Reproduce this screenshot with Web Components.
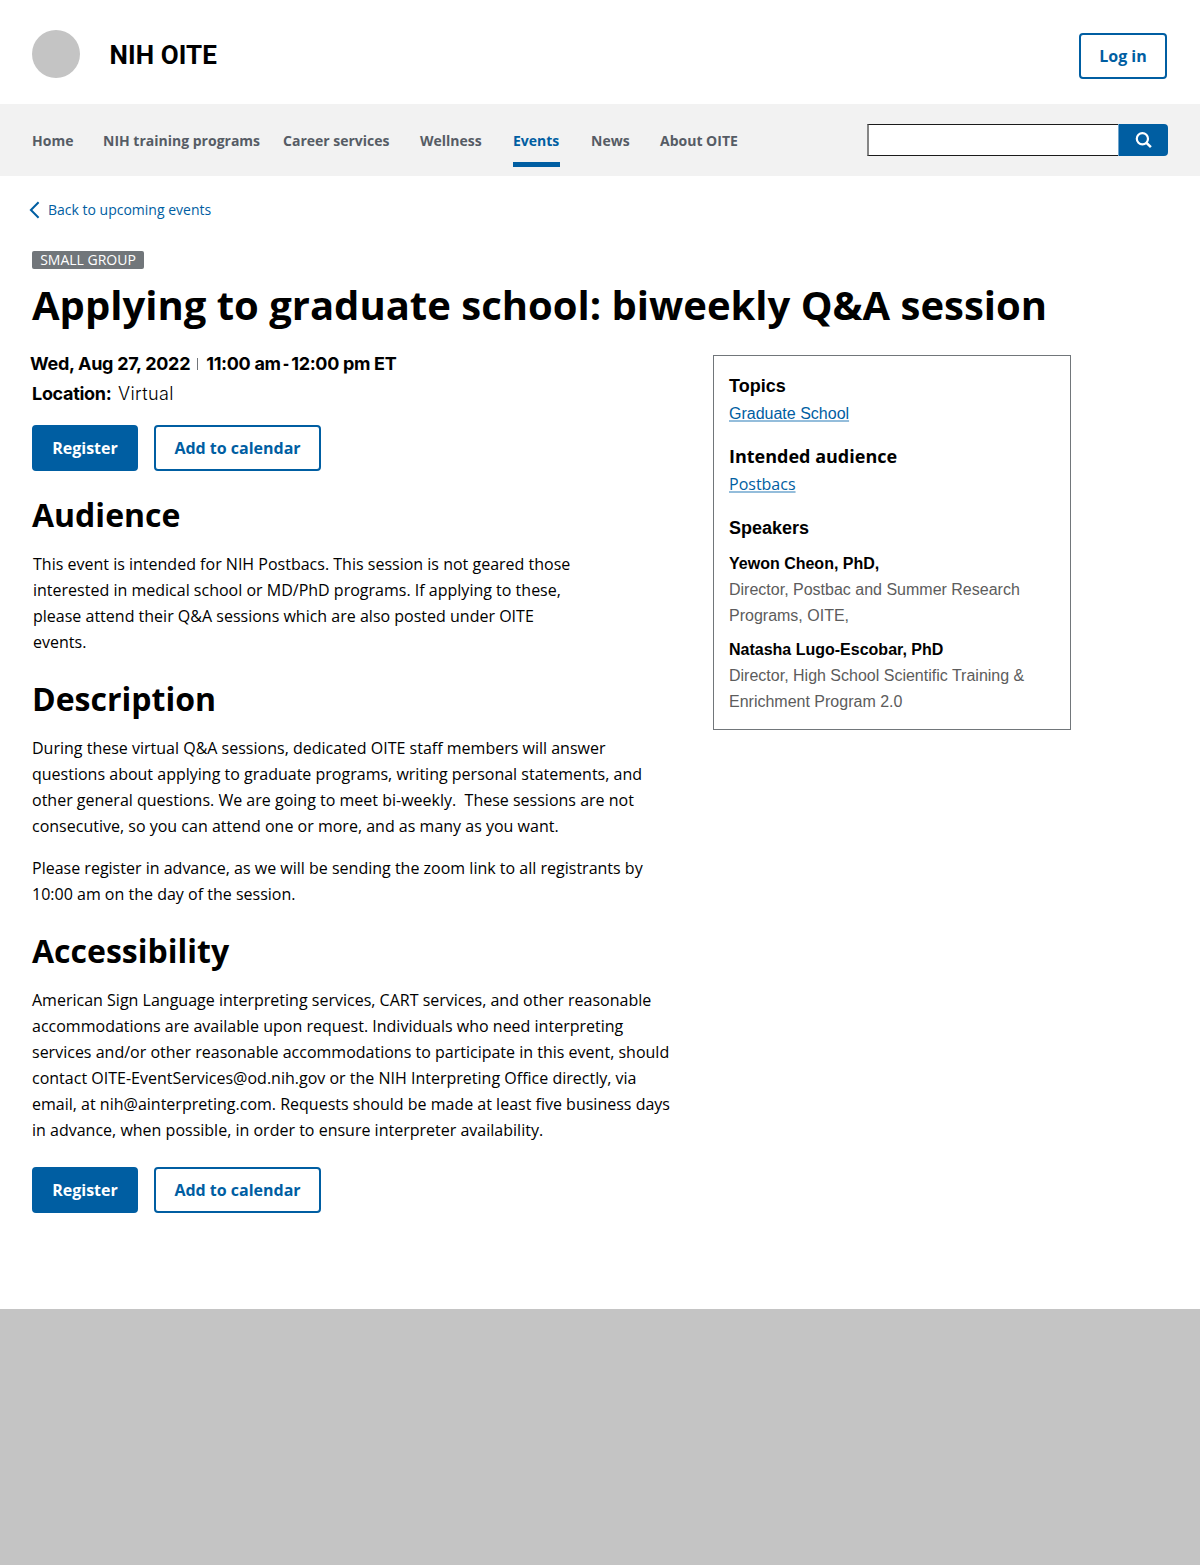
<!DOCTYPE html>
<html lang="en">
<head>
<meta charset="utf-8">
<title>NIH OITE – Event</title>
<style>
html,body{margin:0;padding:0;background:#fff}
body{width:1200px;font-family:"Open Sans","Noto Sans",sans-serif;color:#000}
</style>
</head>
<body>
<event-page></event-page>
<script>
const define=(name,css,html)=>customElements.define(name,class extends HTMLElement{
  constructor(){super();this.attachShadow({mode:'open'}).innerHTML=`<style>*{box-sizing:border-box}${css}</style>${html}`;}
});

define('site-button',`
:host{display:block}
button{display:block;height:46px;width:100%;padding:0 18px;border:2px solid #005ea2;border-radius:4px;background:#fff;color:#005ea2;font:700 16px/42px "Open Sans",sans-serif;text-align:center;white-space:nowrap}
:host([primary]) button{background:#005ea2;color:#fff}`,
`<button><slot></slot></button>`);

define('site-header',`
:host{display:flex;height:104px;padding:0 33px 0 32px;align-items:flex-start}
.logo{width:48px;height:48px;border-radius:50%;background:#c4c4c4;margin-top:30px}
.name{margin:37px 0 0 29.5px;font:700 26px/36px Roboto,sans-serif;letter-spacing:.1px;white-space:nowrap}
site-button{margin:33px 0 0 auto;width:88px}`,
`<div class="logo"></div><div class="name">NIH OITE</div><site-button>Log in</site-button>`);

define('nav-link',`
:host{display:block;font:700 14px/20px "Open Sans",sans-serif;color:#565c65;white-space:nowrap}
span{display:block;width:max-content;height:36px;border-bottom:5px solid transparent}
:host([current]) span{min-width:47px;color:#005ea2;border-color:#005ea2}`,
`<span><slot></slot></span>`);

define('search-box',`
:host{display:flex;width:301px;height:32px}
input{flex:1;min-width:0;height:32px;border:solid #1b1b1b;border-width:1px 0 1px 2px;border-left-color:#868686;border-radius:0;background:#fff;padding:0 8px;margin:0;outline:0}
button{width:50px;height:32px;border:0;border-left:1px solid #6fa3ca;padding:0;margin:0;background:#005ea2;border-radius:0 4px 4px 0}
svg{display:block;margin-left:16px}`,
`<input aria-label="Search"><button aria-label="Search"><svg width="18" height="18" viewBox="0 0 18 18" fill="none" stroke="#fff" stroke-width="2.2"><circle cx="7.4" cy="7.8" r="5.6"/><path d="M11.5 11.8l4.4 4.4" stroke-width="2.5"/></svg></button>`);

define('site-nav',`
:host{display:flex;height:72px;background:#f2f2f2;padding:0 32px}
nav{display:flex;padding-top:27px}
search-box{margin:20px 0 0 auto}`,
`<nav><nav-link style="width:71px">Home</nav-link><nav-link style="width:180px">NIH training programs</nav-link><nav-link style="width:137px">Career services</nav-link><nav-link style="width:93px">Wellness</nav-link><nav-link current style="width:78px">Events</nav-link><nav-link style="width:69px">News</nav-link><nav-link>About OITE</nav-link></nav><search-box></search-box>`);

define('back-link',`
:host{display:flex;height:20px;align-items:center;margin-left:-3px}
svg{display:block}
a{margin-left:8px;color:#005ea2;font-size:14px;line-height:20px;white-space:nowrap}`,
`<svg width="11" height="18" viewBox="0 0 11 18" fill="none" stroke="#005ea2" stroke-width="2"><path d="M9.6 1.2L1.9 9l7.7 7.8"/></svg><a><slot></slot></a>`);

define('event-tag',`
:host{display:block;width:112px;height:18px;border-radius:2px;background:#71767a;color:#fff;font-size:14px;line-height:18px;text-align:center;white-space:nowrap}`,
`<slot></slot>`);

define('event-facts',`
:host{display:block;font:400 18px/30px Inter,sans-serif}
div{display:flex;height:30px;white-space:nowrap;align-items:center}
b{font-weight:650;letter-spacing:-.3px}
.t{letter-spacing:-.31px}
.t span{font-family:"Liberation Sans",sans-serif;letter-spacing:0;margin:0 -1.7px}
.v{font-weight:350;letter-spacing:.38px;margin-left:6.5px}
i{width:1px;height:12px;background:#71767a;margin:0 8px 0 7px}
.when{margin-left:-2px}`,
`<div class="when"><b>Wed, Aug 27, 2022</b><i></i><b class="t">11:00 am <span>-</span> 12:00 pm ET</b></div><div><b>Location:</b><span class="v">Virtual</span></div>`);

define('event-actions',`
:host{display:flex;gap:16px}`,
`<site-button primary style="width:106px">Register</site-button><site-button style="width:167px">Add to calendar</site-button>`);

define('text-section',`
:host{display:block}
h2{margin:0 0 14px;font-size:32px;line-height:44px;font-weight:700;white-space:nowrap}
.body{display:flex;flex-direction:column;gap:16px}
::slotted(p){margin:0;font-size:16px;line-height:26px;letter-spacing:.006px;white-space:pre}`,
`<h2><slot name="title"></slot></h2><div class="body"><slot></slot></div>`);

define('info-group',`
:host{display:block}
h3{margin:0;font:700 18px/26px "Open Sans",sans-serif;white-space:nowrap}
:host([plain]) h3{font-family:"Liberation Sans",sans-serif}`,
`<h3><slot name="title"></slot></h3><slot></slot>`);

define('topic-link',`
:host{display:block;margin-top:2px;font-size:16px;line-height:26px;color:#005ea2;white-space:nowrap}
:host([plain]){font-family:"Liberation Sans",sans-serif}
a{text-decoration:underline;text-decoration-color:#94bddb;text-decoration-thickness:2px;text-underline-offset:1px;text-decoration-skip-ink:none}`,
`<a><slot></slot></a>`);

define('speaker-item',`
:host{display:block;font:16px/26px "Liberation Sans",sans-serif;color:#5c5c5c;white-space:pre}
b{display:block;color:#000}`,
`<b><slot name="name"></slot></b><slot></slot>`);

define('event-sidebar',`
:host{display:block;width:358px;height:375px;border:1px solid #71767a;padding:17px 15px}
.aud{margin-top:16px}.who{margin-top:18px}
.sp{margin-top:10px}.sp+.sp{margin-top:8px}`,
`<info-group plain><span slot="title">Topics</span><topic-link plain>Graduate School</topic-link></info-group>
<info-group class="aud"><span slot="title">Intended audience</span><topic-link>Postbacs</topic-link></info-group>
<info-group class="who" plain><span slot="title">Speakers</span><speaker-item class="sp"><span slot="name">Yewon Cheon, PhD,</span>Director, Postbac and Summer Research
Programs, OITE,</speaker-item><speaker-item class="sp"><span slot="name">Natasha Lugo-Escobar, PhD</span>Director, High School Scientific Training &amp;
Enrichment Program 2.0</speaker-item></info-group>`);

define('event-page',`
:host{display:block}
main{height:1133px;padding:24px 32px 0}
event-tag{margin-top:31px}
h1{margin:8px 0 0;font-size:40px;line-height:56px;font-weight:700;white-space:nowrap}
.cols{display:flex;margin-top:16px}
.left{width:681px}
event-actions{margin-top:16px}
event-sidebar{margin-top:6px}
text-section{margin-top:22px}
footer{height:256px;background:#c4c4c4}`,
`<site-header></site-header><site-nav></site-nav>
<main><back-link>Back to upcoming events</back-link><event-tag>SMALL GROUP</event-tag>
<h1>Applying to graduate school: biweekly Q&amp;A session</h1>
<div class="cols"><div class="left"><event-facts></event-facts><event-actions></event-actions>
<text-section><span slot="title">Audience</span><p style="padding-left:1px">This event is intended for NIH Postbacs. This session is not geared those
interested in medical school or MD/PhD programs. If applying to these,
please attend their Q&amp;A sessions which are also posted under OITE
events.</p></text-section>
<text-section><span slot="title">Description</span><p>During these virtual Q&amp;A sessions, dedicated OITE staff members will answer
questions about applying to graduate programs, writing personal statements, and
other general questions. We are going to meet bi-weekly.  These sessions are not
consecutive, so you can attend one or more, and as many as you want.</p><p>Please register in advance, as we will be sending the zoom link to all registrants by
10:00 am on the day of the session.</p></text-section>
<text-section><span slot="title">Accessibility</span><p>American Sign Language interpreting services, CART services, and other reasonable
accommodations are available upon request. Individuals who need interpreting
services and/or other reasonable accommodations to participate in this event, should
contact OITE-EventServices@od.nih.gov or the NIH Interpreting Office directly, via
email, at nih@ainterpreting.com. Requests should be made at least five business days
in advance, when possible, in order to ensure interpreter availability.</p></text-section>
<event-actions style="margin-top:24px"></event-actions></div>
<event-sidebar></event-sidebar></div></main>
<footer></footer>`);
</script>
</body>
</html>
